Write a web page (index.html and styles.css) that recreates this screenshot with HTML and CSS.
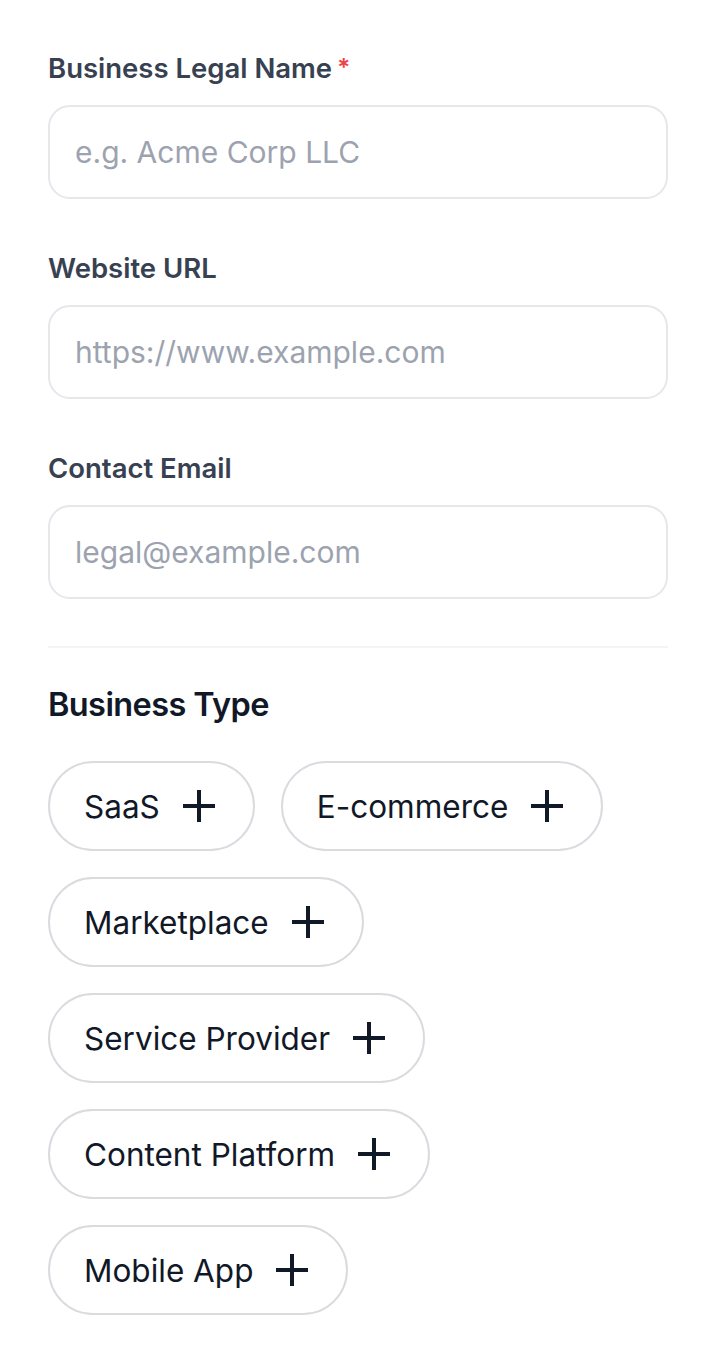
FILE: index.html
```html
<!DOCTYPE html>
<html lang="en">
<head>
<meta charset="utf-8">
<title>Business details</title>
<link rel="stylesheet" href="styles.css">
</head>
<body>
<form class="form">
  <div class="field">
    <label class="label" for="legal">Business Legal Name<span class="req">*</span></label>
    <input class="input" id="legal" type="text" placeholder="e.g. Acme Corp LLC">
  </div>
  <div class="field">
    <label class="label" for="url">Website URL</label>
    <input class="input" id="url" type="text" placeholder="https://www.example.com">
  </div>
  <div class="field">
    <label class="label" for="email">Contact Email</label>
    <input class="input" id="email" type="text" placeholder="legal@example.com">
  </div>
  <hr class="divider">
  <section class="types">
    <h2 class="heading">Business Type</h2>
    <div class="chips">
      <button type="button" class="chip"><span>SaaS</span><svg class="plus" viewBox="0 0 24 24"><path d="M5 12h14M12 5v14"/></svg></button>
      <button type="button" class="chip"><span>E-commerce</span><svg class="plus" viewBox="0 0 24 24"><path d="M5 12h14M12 5v14"/></svg></button>
      <button type="button" class="chip"><span>Marketplace</span><svg class="plus" viewBox="0 0 24 24"><path d="M5 12h14M12 5v14"/></svg></button>
      <button type="button" class="chip"><span>Service Provider</span><svg class="plus" viewBox="0 0 24 24"><path d="M5 12h14M12 5v14"/></svg></button>
      <button type="button" class="chip"><span>Content Platform</span><svg class="plus" viewBox="0 0 24 24"><path d="M5 12h14M12 5v14"/></svg></button>
      <button type="button" class="chip"><span>Mobile App</span><svg class="plus" viewBox="0 0 24 24"><path d="M5 12h14M12 5v14"/></svg></button>
    </div>
  </section>
</form>
</body>
</html>
```
FILE: styles.css
```css
* { box-sizing: border-box; }
html, body { margin: 0; padding: 0; background: #ffffff; }
body {
  font-family: Inter, "Noto Sans", "Liberation Sans", sans-serif;
  color: #111827;
}
.form {
  display: flex;
  flex-direction: column;
  padding: 48px;
}
.field {
  display: flex;
  flex-direction: column;
  gap: 17px;
  margin-bottom: 49px;
}
.label {
  font-size: 27.5px;
  line-height: 40px;
  font-weight: 600;
  color: #374151;
}
.req {
  color: #ef4444;
  margin-left: 5px;
  font-size: 24px;
  vertical-align: 2px;
}
.input {
  height: 94px;
  width: 100%;
  border: 2px solid #e5e7eb;
  border-radius: 22px;
  padding: 0 25px;
  font-family: inherit;
  font-size: 30px;
  color: #111827;
  background: #fff;
  outline: none;
}
.input::placeholder { color: #9ca3af; }
.divider {
  margin: -2px 0 0;
  border: 0;
  height: 2px;
  background: #f3f4f6;
}
.types {
  display: flex;
  flex-direction: column;
  gap: 36px;
  margin-top: 37px;
}
.heading {
  margin: 0;
  font-size: 32.5px;
  line-height: 40px;
  font-weight: 600;
  letter-spacing: -0.6px;
  color: #111827;
}
.chips {
  display: flex;
  flex-wrap: wrap;
  gap: 26px;
}
.chip {
  display: inline-flex;
  align-items: center;
  gap: 15px;
  height: 90px;
  padding: 0 30px 0 34px;
  border: 2px solid #d9dbdf;
  border-radius: 999px;
  background: #fff;
  font-family: inherit;
  font-size: 31.5px;
  font-weight: 420;
  color: #111827;
  cursor: pointer;
}
.plus {
  width: 48px;
  height: 48px;
  fill: none;
  stroke: #111827;
  stroke-width: 2;
  stroke-linecap: square;
}
```
